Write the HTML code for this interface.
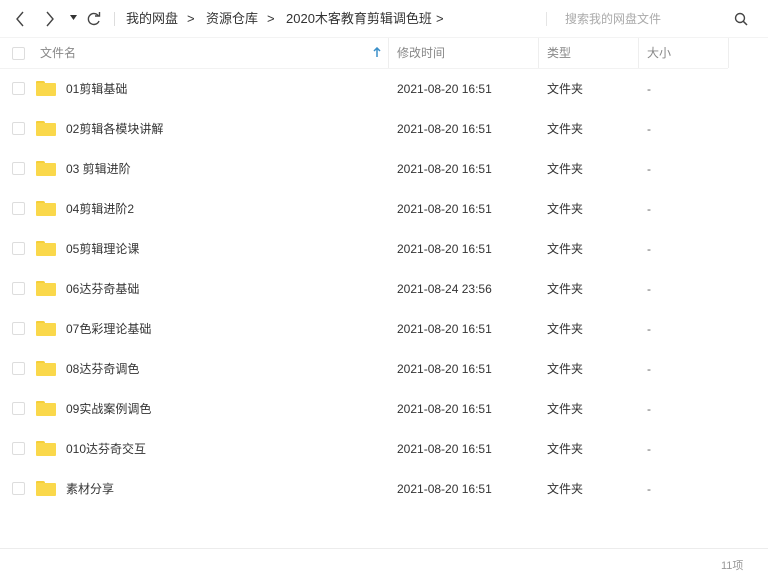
<!DOCTYPE html>
<html><head><meta charset="utf-8"><style>
*{margin:0;padding:0;box-sizing:border-box}
body{width:768px;height:582px;background:#fff;font-family:"Liberation Sans","Noto Sans CJK SC",sans-serif;position:relative;overflow:hidden;color:#333;line-height:16px}
.a{position:absolute;white-space:nowrap;line-height:16px}
.bc{font-size:13px;color:#333;top:11px}
.hd{font-size:12px;color:#888;top:45px}
.cb{position:absolute;left:12px;width:13px;height:13px;border:1px solid #ddd;border-radius:2px;background:#fff}
.fd{position:absolute;left:36px;width:20px;height:15px}
.fd:before{content:"";position:absolute;left:0;top:0;width:9px;height:4px;background:#f5cf3a;border-radius:1px 2px 0 0}
.fd:after{content:"";position:absolute;left:0;top:2px;width:20px;height:13px;background:#fad84b;border-radius:1px}
.t{font-size:12px;color:#333}
.vl{position:absolute;top:38px;width:1px;height:30px;background:#eee}
</style></head><body>
<svg class="a" style="left:14px;top:11px" width="12" height="16"><path d="M9 1L3 8l6 7" fill="none" stroke="#444" stroke-width="1.4"/></svg>
<svg class="a" style="left:44px;top:11px" width="12" height="16"><path d="M3 1l6 7-6 7" fill="none" stroke="#444" stroke-width="1.4"/></svg>
<svg class="a" style="left:70px;top:15px" width="8" height="6"><path d="M0 0h7L3.5 5z" fill="#333"/></svg>
<svg class="a" style="left:86px;top:11px" width="16" height="16"><path d="M12.5 5A5.5 5.5 0 1 0 13 10" fill="none" stroke="#444" stroke-width="1.4"/><path d="M9 5h4.5V1" fill="none" stroke="#444" stroke-width="1.4"/></svg>
<div class="a" style="left:114px;top:12px;width:1px;height:14px;background:#ddd"></div>
<div class="a bc" style="left:126px">我的网盘</div>
<div class="a bc" style="left:187px">&gt;</div>
<div class="a bc" style="left:206px">资源仓库</div>
<div class="a bc" style="left:267px">&gt;</div>
<div class="a bc" style="left:286px">2020木客教育剪辑调色班</div>
<div class="a bc" style="left:436px">&gt;</div>
<div class="a" style="left:546px;top:12px;width:1px;height:14px;background:#e5e5e5"></div>
<div class="a" style="left:565px;top:11px;font-size:12px;color:#aaa">搜索我的网盘文件</div>
<svg class="a" style="left:734px;top:12px" width="14" height="14"><circle cx="6" cy="6" r="4.5" fill="none" stroke="#444" stroke-width="1.4"/><path d="M9.3 9.3L13 13" stroke="#444" stroke-width="1.5"/></svg>
<div class="a" style="left:0;top:37px;width:768px;height:1px;background:#f3f3f3"></div>
<div class="a" style="left:0;top:68px;width:728px;height:1px;background:#f2f2f2"></div>
<div class="cb" style="top:47px"></div>
<div class="a hd" style="left:40px">文件名</div>
<svg class="a" style="left:373px;top:47px" width="8" height="11"><path d="M4 1v9M1 4l3-3 3 3" fill="none" stroke="#3a8fc8" stroke-width="1.5"/></svg>
<div class="vl" style="left:388px"></div>
<div class="a hd" style="left:397px">修改时间</div>
<div class="vl" style="left:538px"></div>
<div class="a hd" style="left:547px">类型</div>
<div class="vl" style="left:638px"></div>
<div class="a hd" style="left:647px">大小</div>
<div class="vl" style="left:728px"></div>
<div id="rows"></div>
<div class="a" style="left:0;top:548px;width:768px;height:1px;background:#ececec"></div>
<div class="a" style="left:721px;top:558px;font-size:11px;color:#999">11项</div>
<script>
var d=[["01剪辑基础","2021-08-20 16:51"],["02剪辑各模块讲解","2021-08-20 16:51"],["03 剪辑进阶","2021-08-20 16:51"],["04剪辑进阶2","2021-08-20 16:51"],["05剪辑理论课","2021-08-20 16:51"],["06达芬奇基础","2021-08-24 23:56"],["07色彩理论基础","2021-08-20 16:51"],["08达芬奇调色","2021-08-20 16:51"],["09实战案例调色","2021-08-20 16:51"],["010达芬奇交互","2021-08-20 16:51"],["素材分享","2021-08-20 16:51"]];
var h="";d.forEach(function(r,i){var c=89+40*i;
h+='<div class="cb" style="top:'+(c-7)+'px"></div><div class="fd" style="top:'+(c-8)+'px"></div>'+
'<div class="a t" style="left:66px;top:'+(c-8)+'px">'+r[0]+'</div>'+
'<div class="a t" style="left:397px;top:'+(c-8)+'px">'+r[1]+'</div>'+
'<div class="a t" style="left:547px;top:'+(c-8)+'px">文件夹</div>'+
'<div class="a t" style="left:647px;top:'+(c-8)+'px;color:#666">-</div>';});
document.getElementById("rows").innerHTML=h;
</script>
</body></html>
